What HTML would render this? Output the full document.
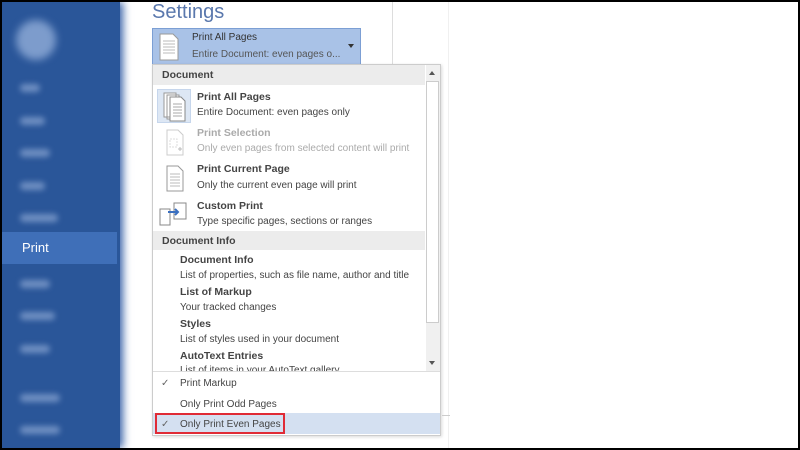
<!DOCTYPE html>
<html><head><style>
*{margin:0;padding:0;box-sizing:border-box}
body{width:800px;height:450px;background:#000;position:relative;overflow:hidden;font-family:"Liberation Sans",sans-serif}
#main{position:absolute;left:2px;top:2px;width:796px;height:446px;background:#fff;overflow:hidden}
#side{position:absolute;left:0;top:0;width:118px;height:446px;background:#2a5699;box-shadow:3px 0 8px #3a63a8}
.blur{position:absolute;left:18px;height:8px;background:#6f8fc2;border-radius:4px;filter:blur(3px)}
#print{position:absolute;left:0;top:230px;width:115px;height:32px;background:#3f6fb8;color:#fff;font-size:13px;line-height:32px;padding-left:20px}
.abs{position:absolute}
.t{font-size:10px;color:#444;white-space:nowrap}
.b{font-weight:bold;color:#444;font-size:10.5px}
.g{color:#aaa}
</style></head><body>
<div id="main">
<div id="side">
 <div class="abs" style="left:14px;top:18px;width:40px;height:40px;border-radius:50%;background:#7d9ccc;filter:blur(4px)"></div>
 <div class="blur" style="top:82px;width:20px"></div>
 <div class="blur" style="top:115px;width:25px"></div>
 <div class="blur" style="top:147px;width:30px"></div>
 <div class="blur" style="top:180px;width:25px"></div>
 <div class="blur" style="top:212px;width:38px"></div>
 <div class="blur" style="top:278px;width:30px"></div>
 <div class="blur" style="top:310px;width:35px"></div>
 <div class="blur" style="top:343px;width:30px"></div>
 <div class="blur" style="top:392px;width:40px"></div>
 <div class="blur" style="top:424px;width:40px"></div>
 <div id="print">Print</div>
</div>
<div class="abs" style="left:390px;top:0;width:1px;height:62px;background:#ddd"></div>
<div class="abs" style="left:446px;top:0;width:1px;height:446px;background:#f0f0f0"></div>
<div class="abs" style="left:150px;top:-1px;font-size:20px;color:#5a78ad">Settings</div>
<div class="abs" style="left:150px;top:26px;width:209px;height:37px;background:#a9c2e7;border:1px solid #7c9fd4"></div>
<svg class="abs" style="left:156px;top:30px" width="22" height="30"><path d="M2 2h13l5 5v21H2z" fill="#fff" stroke="#999"/><path d="M5 9h12M5 12h12M5 15h12M5 18h12M5 21h12" stroke="#bbb"/></svg>
<div class="abs t" style="left:190px;top:30px;color:#333">Print All Pages</div>
<div class="abs t" style="left:190px;top:47px;color:#555">Entire Document: even pages o...</div>
<div class="abs" style="left:346px;top:42px;border:3px solid transparent;border-top:4px solid #333"></div>

<div class="abs" style="left:150px;top:62px;width:289px;height:372px;background:#fff;border:1px solid #ccc;box-shadow:1px 1px 3px rgba(0,0,0,.15)">
 <div class="abs" style="left:0;top:0;width:272px;height:20px;background:#ececec"></div>
 <div class="abs t b" style="left:9px;top:4px">Document</div>
 <div class="abs" style="left:4px;top:24px;width:34px;height:34px;background:#dde7f4;border:1px solid #c6d6ec"></div>
 <svg class="abs" style="left:9px;top:27px" width="26" height="30"><path d="M2 1h12v24H2zM5 3h12v24H5z" fill="#fff" stroke="#999"/><path d="M8 5h11l4 4v20H8z" fill="#fff" stroke="#888"/><path d="M11 12h9M11 15h9M11 18h9M11 21h9M11 24h9" stroke="#aaa"/></svg>
 <div class="abs t b" style="left:44px;top:26px">Print All Pages</div>
 <div class="abs t" style="left:44px;top:42px">Entire Document: even pages only</div>
 <svg class="abs" style="left:12px;top:64px" width="20" height="28"><path d="M2 1h11l5 5v20H2z" fill="#fff" stroke="#ccc"/><path d="M5 10h7v8H5z" fill="none" stroke="#ddd" stroke-dasharray="2 1"/><path d="M13 20h4M15 18v4" stroke="#bbb"/></svg>
 <div class="abs t b g" style="left:44px;top:62px">Print Selection</div>
 <div class="abs t g" style="left:44px;top:78px">Only even pages from selected content will print</div>
 <svg class="abs" style="left:12px;top:100px" width="20" height="28"><path d="M2 1h11l5 5v20H2z" fill="#fff" stroke="#999"/><path d="M5 9h10M5 12h10M5 15h10M5 18h10M5 21h10" stroke="#bbb"/></svg>
 <div class="abs t b" style="left:44px;top:98px">Print Current Page</div>
 <div class="abs t" style="left:44px;top:115px">Only the current even page will print</div>
 <svg class="abs" style="left:5px;top:136px" width="32" height="26"><path d="M2 8h10v16H2z" fill="#fff" stroke="#888"/><path d="M16 2h12v16H16z" fill="#fff" stroke="#888"/><path d="M10 11h10M17 8l3 3-3 3" stroke="#3a6fc0" stroke-width="2" fill="none"/></svg>
 <div class="abs t b" style="left:44px;top:135px">Custom Print</div>
 <div class="abs t" style="left:44px;top:151px">Type specific pages, sections or ranges</div>
 <div class="abs" style="left:0;top:166px;width:272px;height:19px;background:#ececec"></div>
 <div class="abs t b" style="left:9px;top:170px">Document Info</div>
 <div class="abs t b" style="left:27px;top:189px">Document Info</div>
 <div class="abs t" style="left:27px;top:205px">List of properties, such as file name, author and title</div>
 <div class="abs t b" style="left:27px;top:221px">List of Markup</div>
 <div class="abs t" style="left:27px;top:237px">Your tracked changes</div>
 <div class="abs t b" style="left:27px;top:253px">Styles</div>
 <div class="abs t" style="left:27px;top:269px">List of styles used in your document</div>
 <div class="abs t b" style="left:27px;top:285px">AutoText Entries</div>
 <div class="abs" style="left:0;top:299px;width:272px;height:7px;overflow:hidden"><div class="abs t" style="left:27px;top:1px">List of items in your AutoText gallery</div></div>
 <div class="abs" style="left:273px;top:0;width:14px;height:306px;background:#f0f0f0"></div>
 <div class="abs" style="left:273px;top:16px;width:13px;height:242px;background:#fff;border:1px solid #ccc"></div>
 <div class="abs" style="left:276px;top:6px;border:3px solid transparent;border-bottom:4px solid #555;border-top:0"></div>
 <div class="abs" style="left:276px;top:296px;border:3px solid transparent;border-top:4px solid #555;border-bottom:0"></div>
 <div class="abs" style="left:0;top:306px;width:287px;height:1px;background:#ddd"></div>
 <div class="abs t" style="left:8px;top:313px;color:#666">✓</div>
 <div class="abs t" style="left:27px;top:313px">Print Markup</div>
 <div class="abs t" style="left:27px;top:334px">Only Print Odd Pages</div>
 <div class="abs" style="left:0;top:348px;width:287px;height:21px;background:#d4e0f1"></div>
 <div class="abs" style="left:2px;top:348px;width:130px;height:21px;border:2px solid #e02b36"></div>
 <div class="abs t" style="left:8px;top:354px;color:#666">✓</div>
 <div class="abs t" style="left:27px;top:354px">Only Print Even Pages</div>
</div>
<div class="abs" style="left:440px;top:413px;width:8px;height:1px;background:#ccc"></div>
</div>
</body></html>
